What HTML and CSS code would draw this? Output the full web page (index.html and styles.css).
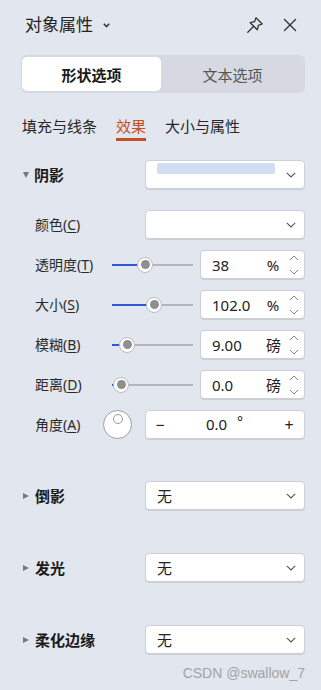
FILE: index.html
```html
<!DOCTYPE html>
<html lang="zh">
<head>
<meta charset="utf-8">
<link rel="stylesheet" href="styles.css">
</head>
<body>
<div class="panel">
  <div class="header">
    <div class="title">对象属性<svg class="caret" width="7" height="5" viewBox="0 0 7 5"><path d="M0.8 0.8 L3.5 3.6 L6.2 0.8" fill="none" stroke="#333" stroke-width="1.5"/></svg></div>
    <div class="hicons">
      <svg width="18" height="18" viewBox="0 0 18 18"><path d="M10 1.8 L16.2 8 L12.4 9.4 L11.3 13.8 L4.2 6.7 L8.6 5.6 Z M7.2 10.8 L1.8 16.2" fill="none" stroke="#333" stroke-width="1.3" stroke-linejoin="round" stroke-linecap="round"/></svg>
      <svg width="14" height="14" viewBox="0 0 14 14"><path d="M1.5 1.5 L12.5 12.5 M12.5 1.5 L1.5 12.5" stroke="#333" stroke-width="1.4" stroke-linecap="round"/></svg>
    </div>
  </div>

  <div class="seg">
    <div class="seg-item active">形状选项</div>
    <div class="seg-item">文本选项</div>
  </div>

  <div class="subtabs">
    <span class="stab">填充与线条</span>
    <span class="stab on">效果</span>
    <span class="stab">大小与属性</span>
  </div>

  <div class="row first">
    <div class="head w-dd"><span class="tri-down"></span><span class="sec">阴影</span></div>
    <div class="box dd"><span class="swatch"></span><span class="fill"></span><svg class="chev" width="10" height="6" viewBox="0 0 10 6"><path d="M0.8 0.8 L5 5 L9.2 0.8" fill="none" stroke="#555" stroke-width="1.1"/></svg></div>
  </div>

  <div class="row gap21">
    <div class="head w-dd"><span class="lbl">颜色(<u>C</u>)</span></div>
    <div class="box dd"><span class="fill"></span><svg class="chev" width="10" height="6" viewBox="0 0 10 6"><path d="M0.8 0.8 L5 5 L9.2 0.8" fill="none" stroke="#555" stroke-width="1.1"/></svg></div>
  </div>

  <div class="row gap11">
    <div class="head w-sl"><span class="lbl">透明度(<u>T</u>)</span></div>
    <div class="slider" style="--p:33px"><span class="knob"></span></div>
    <div class="box num"><span class="val">38</span><span class="unit">%</span><svg class="spin" width="12" height="27" viewBox="0 0 12 27"><path d="M2 9 L6 5 L10 9 M2 19 L6 23 L10 19" fill="none" stroke="#888" stroke-width="1"/></svg></div>
  </div>

  <div class="row gap11">
    <div class="head w-sl"><span class="lbl">大小(<u>S</u>)</span></div>
    <div class="slider" style="--p:42px"><span class="knob"></span></div>
    <div class="box num"><span class="val">102.0</span><span class="unit">%</span><svg class="spin" width="12" height="27" viewBox="0 0 12 27"><path d="M2 9 L6 5 L10 9 M2 19 L6 23 L10 19" fill="none" stroke="#888" stroke-width="1"/></svg></div>
  </div>

  <div class="row gap11">
    <div class="head w-sl"><span class="lbl">模糊(<u>B</u>)</span></div>
    <div class="slider" style="--p:15px"><span class="knob"></span></div>
    <div class="box num"><span class="val">9.00</span><span class="unit">磅</span><svg class="spin" width="12" height="27" viewBox="0 0 12 27"><path d="M2 9 L6 5 L10 9 M2 19 L6 23 L10 19" fill="none" stroke="#888" stroke-width="1"/></svg></div>
  </div>

  <div class="row gap11">
    <div class="head w-sl"><span class="lbl">距离(<u>D</u>)</span></div>
    <div class="slider" style="--p:9px"><span class="knob"></span></div>
    <div class="box num"><span class="val">0.0</span><span class="unit">磅</span><svg class="spin" width="12" height="27" viewBox="0 0 12 27"><path d="M2 9 L6 5 L10 9 M2 19 L6 23 L10 19" fill="none" stroke="#888" stroke-width="1"/></svg></div>
  </div>

  <div class="row gap11">
    <div class="head w-an"><span class="lbl">角度(<u>A</u>)</span></div>
    <div class="dial"><span class="dot"></span></div>
    <div class="box angle"><span class="op">−</span><span class="aval">0.0<sup class="deg">°</sup></span><span class="op plus">+</span></div>
  </div>

  <div class="row gap42">
    <div class="head w-dd"><span class="tri-right"></span><span class="sec">倒影</span></div>
    <div class="box dd"><span class="txt">无</span><span class="fill"></span><svg class="chev" width="10" height="6" viewBox="0 0 10 6"><path d="M0.8 0.8 L5 5 L9.2 0.8" fill="none" stroke="#555" stroke-width="1.1"/></svg></div>
  </div>

  <div class="row gap43">
    <div class="head w-dd"><span class="tri-right"></span><span class="sec">发光</span></div>
    <div class="box dd"><span class="txt">无</span><span class="fill"></span><svg class="chev" width="10" height="6" viewBox="0 0 10 6"><path d="M0.8 0.8 L5 5 L9.2 0.8" fill="none" stroke="#555" stroke-width="1.1"/></svg></div>
  </div>

  <div class="row gap43">
    <div class="head w-dd"><span class="tri-right"></span><span class="sec">柔化边缘</span></div>
    <div class="box dd"><span class="txt">无</span><span class="fill"></span><svg class="chev" width="10" height="6" viewBox="0 0 10 6"><path d="M0.8 0.8 L5 5 L9.2 0.8" fill="none" stroke="#555" stroke-width="1.1"/></svg></div>
  </div>

  <div class="wm">CSDN @swallow_7</div>
</div>
</body>
</html>
```

FILE: styles.css
```css
* { box-sizing: border-box; }
html, body {
  margin: 0;
  padding: 0;
  background: #e2e6ee;
}
body {
  font-family: "Noto Sans", "Noto Sans CJK SC", sans-serif;
  color: #262626;
  width: 321px;
  height: 690px;
  overflow: hidden;
}
.panel {
  display: flex;
  flex-direction: column;
}
.header {
  height: 50px;
  display: flex;
  align-items: center;
  justify-content: space-between;
  padding: 0 24px 0 25px;
}
.title {
  font-size: 17px;
  line-height: 22px;
  color: #222;
  display: flex;
  align-items: center;
}
.caret { margin-left: 10px; margin-top: 1px; }
.hicons {
  display: flex;
  align-items: center;
  gap: 19px;
}
.seg {
  margin: 5px 0 0 21px;
  width: 284px;
  height: 38px;
  background: #d6d9e1;
  border-radius: 6px;
  padding: 2px 1px;
  display: flex;
}
.seg-item {
  flex: 1;
  display: flex;
  align-items: center;
  justify-content: center;
  font-size: 15px;
  color: #555;
  border-radius: 5px;
}
.seg-item.active {
  flex: 0 0 139px;
  background: #fff;
  color: #1a1a1a;
  font-weight: 700;
}
.subtabs {
  margin-top: 23px;
  padding-left: 22px;
  display: flex;
  gap: 19px;
}
.stab {
  font-size: 15px;
  line-height: 20px;
  padding-bottom: 2px;
  border-bottom: 3px solid transparent;
  color: #262626;
}
.stab.on {
  color: #c4511d;
  border-bottom-color: #c4511d;
}
.row {
  display: flex;
  align-items: center;
  height: 29px;
  padding: 0 16px 0 23px;
}
.row.first { margin-top: 19px; }
.row.gap21 { margin-top: 21px; }
.row.gap11 { margin-top: 11px; }
.row.gap42 { margin-top: 42px; }
.row.gap43 { margin-top: 43px; }
.head {
  display: flex;
  align-items: center;
  flex: none;
}
.w-dd { width: 122px; }
.w-sl { width: 89px; }
.w-an { width: 80px; }
.head .lbl { margin-left: 12px; }
.lbl {
  font-size: 14px;
  color: #2a2a2a;
  line-height: 20px;
}
.lbl u { text-underline-offset: 2px; }
.sec {
  font-size: 15px;
  font-weight: 700;
  color: #1a1a1a;
  line-height: 20px;
}
.tri-down {
  width: 0; height: 0;
  border-left: 3.5px solid transparent;
  border-right: 3.5px solid transparent;
  border-top: 6px solid #777;
  margin-right: 5px;
}
.tri-right {
  width: 0; height: 0;
  border-top: 3.5px solid transparent;
  border-bottom: 3.5px solid transparent;
  border-left: 6px solid #777;
  margin-right: 6px;
}
.box {
  height: 29px;
  background: #fff;
  border: 1px solid #cdd0d6;
  border-radius: 4px;
  box-shadow: 0 1px 0 rgba(0,0,0,0.10);
  display: flex;
  align-items: center;
  flex: 1;
}
.dd { padding: 0 8px 0 11px; }
.swatch {
  align-self: flex-start;
  margin-top: 2px;
  width: 118px;
  height: 11px;
  background: #d1ddf4;
  border-radius: 2px;
}
.fill { flex: 1; }
.txt { font-size: 15px; color: #222; line-height: 20px; }
.chev { flex: none; }
.slider {
  position: relative;
  width: 81px;
  height: 16px;
  flex: none;
}
.slider::before {
  content: "";
  position: absolute;
  left: 0; right: 0; top: 7px;
  height: 2px;
  background: linear-gradient(to right, #2b5ad6 0, #2b5ad6 var(--p), #b4b6ba var(--p), #b4b6ba 100%);
}
.knob {
  position: absolute;
  top: 0;
  left: calc(var(--p) - 8px);
  width: 16px;
  height: 16px;
  border-radius: 50%;
  background: #fff;
  border: 1.5px solid #b9bbc0;
  display: flex;
  align-items: center;
  justify-content: center;
}
.knob::after {
  content: "";
  width: 9px;
  height: 9px;
  border-radius: 50%;
  background: #8f8f8f;
}
.num {
  margin-left: 7px;
  padding-left: 11px;
}
.val {
  flex: 1;
  font-size: 15px;
  line-height: 20px;
  color: #222;
}
.unit {
  width: 14px;
  text-align: center;
  font-size: 15px;
  line-height: 20px;
  color: #222;
}
.spin { margin: 0 4px 0 8px; flex: none; }
.dial {
  width: 29px;
  height: 29px;
  border-radius: 50%;
  border: 1px solid #9c9ea3;
  background: #fff;
  flex: none;
  display: flex;
  justify-content: center;
  padding-top: 3px;
}
.dot {
  width: 10px;
  height: 10px;
  border-radius: 50%;
  border: 1px solid #999;
}
.angle {
  margin-left: 13px;
  padding: 0 9px 0 8px;
  justify-content: space-between;
}
.op {
  font-size: 16px;
  line-height: 20px;
  color: #222;
  width: 12px;
  text-align: center;
}
.aval {
  font-size: 15px;
  line-height: 20px;
  color: #222;
}
.deg {
  font-size: 14px;
  margin-left: 10px;
  vertical-align: 0;
  position: relative;
  top: -3px;
}
.wm {
  margin-top: 11px;
  padding-right: 16px;
  text-align: right;
  font-family: "Liberation Sans", Arial, sans-serif;
  font-size: 14px;
  line-height: 16px;
  color: #a3a3a3;
}
```
